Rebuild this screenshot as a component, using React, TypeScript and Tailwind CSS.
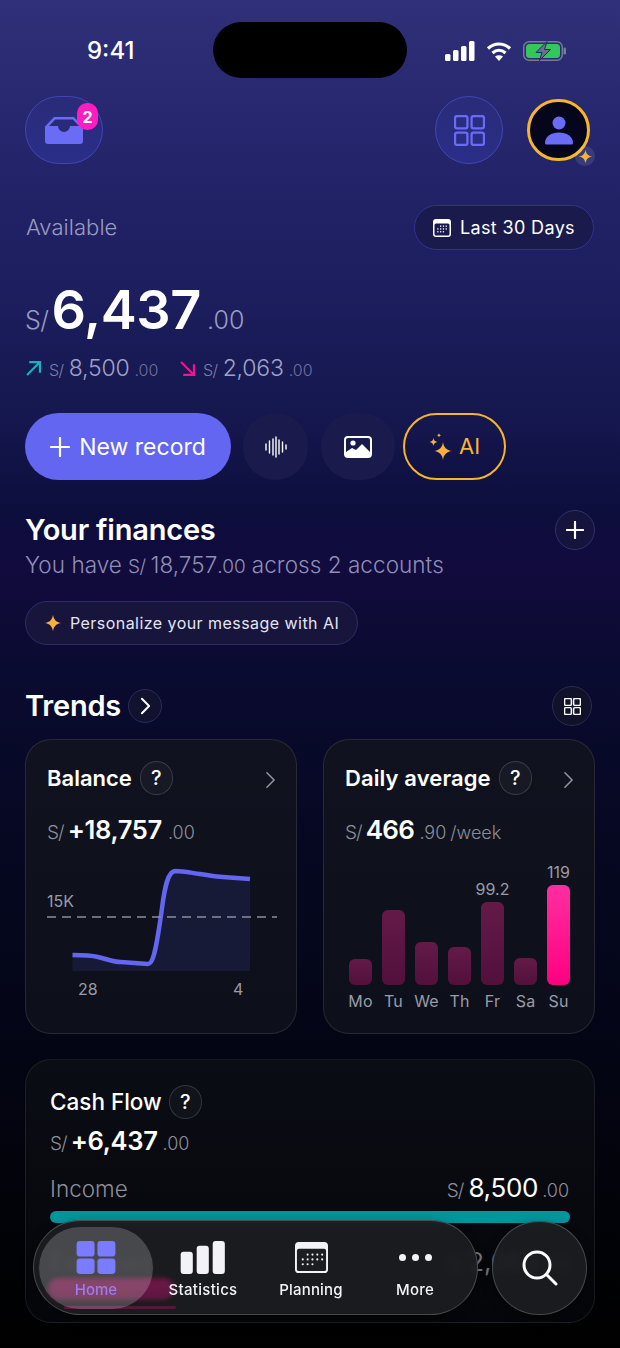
function Sparkle({ className, color = '#fbb03b' }: { className?: string; color?: string }) {
  return (
    <svg viewBox="0 0 24 24" className={className} fill={color}>
      <path d="M12 1c.9 6.600 4.400 10.100 11 11-6.600.9-10.100 4.400-11 11-.9-6.600-4.400-10.100-11-11 6.600-.9 10.100-4.400 11-11z" />
    </svg>
  );
}

function Help() {
  return (
    <div className="flex h-[34px] w-[33px] items-center justify-center rounded-full border border-white/15 bg-white/[0.03] text-[20px] font-medium text-white">
      ?
    </div>
  );
}

function Chevron({ className, strokeWidth = 1.800 }: { className?: string; strokeWidth?: number }) {
  return (
    <svg viewBox="0 0 12 20" className={className} fill="none" stroke="currentColor" strokeWidth={strokeWidth} strokeLinecap="round" strokeLinejoin="round">
      <path d="M2 2l8 8-8 8" />
    </svg>
  );
}

function GridIcon({ className, strokeWidth = 2 }: { className?: string; strokeWidth?: number }) {
  return (
    <svg viewBox="0 0 30 30" className={className} fill="none" stroke="currentColor" strokeWidth={strokeWidth}>
      <rect x="1" y="1" width="12" height="12" rx="2" />
      <rect x="17" y="1" width="12" height="12" rx="2" />
      <rect x="1" y="17" width="12" height="12" rx="2" />
      <rect x="17" y="17" width="12" height="12" rx="2" />
    </svg>
  );
}

const bars = [
  { day: 'Mo', h: 26 },
  { day: 'Tu', h: 75 },
  { day: 'We', h: 43 },
  { day: 'Th', h: 38 },
  { day: 'Fr', h: 83, label: '99.2' },
  { day: 'Sa', h: 27 },
  { day: 'Su', h: 100, label: '119', active: true },
];

export default function App() {
  return (
    <div className="relative h-[1348px] w-[620px] overflow-hidden bg-[linear-gradient(180deg,#30307a_0%,#23246a_12%,#1c1e5e_22%,#14164c_32%,#0c0e3c_38%,#120b3e_42%,#0a0b30_50%,#060822_62%,#04061a_72%,#020308_90%,#000000_100%)] font-['Inter',sans-serif] text-white">
      {/* status bar */}
      <div className="mt-[39px] flex h-[24px] items-center justify-between pl-[87px] pr-[54px]">
        <span className="text-[24px] font-medium leading-none">9:41</span>
        <div className="flex items-center gap-[11px]">
          <svg viewBox="0 0 30 20" className="h-[20px] w-[30px]" fill="white">
            <rect x="0" y="13" width="5.500" height="7" rx="1.500" />
            <rect x="8" y="9" width="5.500" height="11" rx="1.500" />
            <rect x="16" y="5" width="5.500" height="15" rx="1.500" />
            <rect x="24" y="0" width="5.500" height="20" rx="1.500" />
          </svg>
          <svg viewBox="0 0 26 20" className="h-[20px] w-[26px]" fill="none" stroke="white" strokeWidth="3.200">
            <path d="M2 7.500c6.500-6 15.500-6 22 0" />
            <path d="M6.500 12c4-3.600 9-3.600 13 0" />
            <path d="M13 20l-4-4.400c2.400-1.900 5.600-1.900 8 0z" fill="white" stroke="none" />
          </svg>
          <svg viewBox="0 0 43 20" className="h-[20px] w-[43px]">
            <rect x="0.700" y="0.700" width="38.600" height="18.600" rx="5.500" fill="none" stroke="#7a7b96" strokeWidth="1.400" />
            <rect x="3" y="3" width="34" height="14" rx="3.500" fill="#34c759" />
            <rect x="40.500" y="6.500" width="2.500" height="7" rx="1.200" fill="#7a7b96" />
            <path d="M24 0.500L13 11.500h6l-2.500 8 11-11h-6z" fill="#6d6f90" stroke="#23246a" strokeWidth="1" />
          </svg>
        </div>
      </div>
      <div className="absolute left-[213px] top-[22px] h-[56px] w-[194px] rounded-full bg-black" />

      {/* header */}
      <div className="mt-[33px] flex h-[68px] items-center justify-between pl-[25px] pr-[30px]">
        <div className="relative flex h-[68px] w-[78px] items-center justify-center rounded-full border border-[#4047b4] bg-[linear-gradient(180deg,#2a2b78,#2b2e88)]">
          <svg viewBox="0 0 40 28" className="mr-[1px] mt-[-1px] h-[28px] w-[40px]">
            <path d="M10 1h20l9 9.500V25a3 3 0 0 1-3 3H4a3 3 0 0 1-3-3V10.500z" fill="#6a6cf5" />
            <path d="M11.200 3.500h17.600l6.200 6.500H26a6 6 0 0 1-12 0H5z" fill="#2a2b78" />
          </svg>
          <div className="absolute left-[51px] top-[6px] flex h-[27px] w-[21px] items-center justify-center rounded-[10px] bg-[#ff1cc0] text-[16px] font-bold">2</div>
        </div>
        <div className="flex items-center gap-[24px]">
          <div className="flex h-[68px] w-[68px] items-center justify-center rounded-full border border-[#4047b4] bg-[linear-gradient(180deg,#2a2b78,#2b2e88)] text-[#6a6cf5]">
            <GridIcon className="h-[31px] w-[31px]" strokeWidth={2.200} />
          </div>
          <div className="relative flex h-[62px] w-[63px] items-center justify-center rounded-full border-[3px] border-[#f5b62c] bg-[#05051c]">
            <svg viewBox="0 0 28 30" className="h-[30px] w-[28px]" fill="#6a6cf5">
              <circle cx="14" cy="8" r="6.500" />
              <path d="M0 28c0-6.500 6.500-10.500 14-10.500S28 21.500 28 28c0 1-.7 1.500-1.500 1.500h-25C.7 29.500 0 29 0 28z" />
            </svg>
            <div className="absolute left-[45px] top-[44px] flex h-[20px] w-[20px] items-center justify-center rounded-full bg-white/10">
              <Sparkle className="h-[15px] w-[15px]" />
            </div>
          </div>
        </div>
      </div>

      {/* available */}
      <div className="mt-[41px] flex h-[45px] items-center justify-between pl-[26px] pr-[26px]">
        <span className="text-[22px] font-light tracking-[0.05px] text-[#9a9bc0]">Available</span>
        <div className="flex h-[45px] w-[180px] items-center justify-center gap-[9px] rounded-full border border-[#2f3290] bg-[#1a1a4c]">
          <svg viewBox="0 0 18 18" className="h-[18px] w-[18px]">
            <rect x="0" y="0" width="18" height="18" rx="3" fill="white" />
            <rect x="1.500" y="4.500" width="15" height="12" rx="1.500" fill="#1a1a4c" />
            <g fill="white">
              <rect x="7" y="6.500" width="1.300" height="1.300" /><rect x="9.800" y="6.500" width="1.300" height="1.300" /><rect x="12.600" y="6.500" width="1.300" height="1.300" />
              <rect x="4.200" y="9.300" width="1.300" height="1.300" /><rect x="7" y="9.300" width="1.300" height="1.300" /><rect x="9.800" y="9.300" width="1.300" height="1.300" /><rect x="12.600" y="9.300" width="1.300" height="1.300" />
              <rect x="4.200" y="12.100" width="1.300" height="1.300" /><rect x="7" y="12.100" width="1.300" height="1.300" /><rect x="9.800" y="12.100" width="1.300" height="1.300" />
            </g>
          </svg>
          <span className="text-[18px] font-normal tracking-[0.35px]">Last 30 Days</span>
        </div>
      </div>

      <div className="mt-[30px] flex h-[60px] items-baseline pl-[25px]">
        <span className="text-[25px] font-light tracking-[-0.5px] text-[#9a9bc0]">S/</span>
        <span className="ml-[3px] text-[54px] font-semibold leading-[60px] tracking-[-0.4px]">6,437</span>
        <span className="ml-[6px] text-[25px] font-light text-[#9a9bc0]">.00</span>
      </div>

      <div className="mt-[12px] flex h-[32px] items-center pl-[26px]">
        <svg viewBox="0 0 14 14" className="h-[15px] w-[15px]" fill="none" stroke="#16b3bd" strokeWidth="2">
          <path d="M1 13L13 1M3 1h10v10" />
        </svg>
        <div className="ml-[8px] flex w-[110px] items-baseline text-[#a0a1c4]">
          <span className="text-[16px] font-light tracking-[-0.5px] text-[#7f80a6]">S/</span>
          <span className="ml-[5px] text-[23px] font-light tracking-[-0.2px]">8,500</span>
          <span className="ml-[5px] text-[16px] font-light text-[#6f7098]">.00</span>
        </div>
        <svg viewBox="0 0 14 14" className="ml-[21px] h-[15px] w-[15px]" fill="none" stroke="#f0148f" strokeWidth="2">
          <path d="M1 1l12 12M3 13h10V3" />
        </svg>
        <div className="ml-[8px] flex items-baseline text-[#a0a1c4]">
          <span className="text-[16px] font-light tracking-[-0.5px] text-[#7f80a6]">S/</span>
          <span className="ml-[5px] text-[23px] font-light tracking-[-0.2px]">2,063</span>
          <span className="ml-[5px] text-[16px] font-light text-[#6f7098]">.00</span>
        </div>
      </div>

      {/* actions */}
      <div className="mt-[29px] flex h-[67px] items-center pl-[25px]">
        <div className="flex h-[67px] w-[206px] items-center justify-center gap-[9px] rounded-full bg-[#6366f1]">
          <svg viewBox="0 0 20 20" className="h-[20px] w-[20px]" stroke="white" strokeWidth="2.200" strokeLinecap="round">
            <path d="M10 1v18M1 10h18" />
          </svg>
          <span className="mt-[1px] text-[23px] font-normal">New record</span>
        </div>
        <div className="ml-[12px] flex h-[67px] w-[65px] items-center justify-center rounded-full bg-[#1a1b4c]">
          <svg viewBox="0 0 22 22" className="h-[22px] w-[22px]" stroke="white" strokeWidth="1.400" strokeLinecap="round">
            <path d="M1 8v6M4.500 5v12M8 3v16M11 1v20M14 4v14M17.500 6v10M21 9v4" />
          </svg>
        </div>
        <div className="ml-[13px] flex h-[67px] w-[74px] items-center justify-center rounded-full bg-[#1a1b4c]">
          <svg viewBox="0 0 28 22" className="h-[22px] w-[28px]">
            <rect x="1" y="1" width="26" height="20" rx="3" fill="#1a1b4c" stroke="white" strokeWidth="2" />
            <circle cx="9" cy="7" r="2.600" fill="white" />
            <path d="M2 20v-4l6-4 4 2 6-6 8 8v4z" fill="white" />
          </svg>
        </div>
        <div className="ml-[8px] flex h-[67px] w-[103px] items-center justify-center gap-[6px] rounded-full border-2 border-[#f5b62c]">
          <svg viewBox="0 0 24 28" className="h-[28px] w-[24px]" fill="#fbb03b">
            <path d="M14 9c.7 5.500 3.500 8.300 9 9-5.500.7-8.300 3.500-9 9-.7-5.500-3.500-8.300-9-9 5.500-.7 8.300-3.500 9-9z" />
            <path d="M4.500 5c.3 2.400 1.600 3.700 4 4-2.400.3-3.700 1.600-4 4-.3-2.400-1.600-3.700-4-4 2.400-.3 3.700-1.600 4-4z" />
            <path d="M10 0c.2 1.400.9 2.100 2.300 2.300-1.400.2-2.100.9-2.300 2.300-.2-1.400-.9-2.100-2.300-2.300C9.100 2.100 9.800 1.400 10 0z" />
          </svg>
          <span className="text-[22px] font-normal text-[#fbb03b]">AI</span>
        </div>
      </div>

      {/* finances */}
      <div className="mt-[30px] flex items-start justify-between pl-[25px] pr-[25px]">
        <div>
          <div className="text-[29px] font-semibold leading-[40px] tracking-[-0.2px]">Your finances</div>
          <div className="mt-[-3px] flex items-baseline text-[22.500px] font-light leading-[36px] tracking-[0.05px] text-[#8f8fb4]">
            You have<span className="ml-[6px] text-[19px] tracking-[-0.5px]">S/</span>
            <span className="ml-[5px]">18,757</span>
            <span className="text-[19px]">.00</span>
            <span className="ml-[6px]">across 2 accounts</span>
          </div>
        </div>
        <div className="flex h-[40px] w-[40px] items-center justify-center rounded-full border border-[#30316e] bg-[#14143c]">
          <svg viewBox="0 0 20 20" className="h-[18px] w-[18px]" stroke="white" strokeWidth="2.400" strokeLinecap="round">
            <path d="M10 1v18M1 10h18" />
          </svg>
        </div>
      </div>

      <div className="ml-[25px] mt-[16px] flex h-[44px] w-[333px] items-center gap-[8px] rounded-full border border-[#2e2c66] bg-[#17153c] pl-[18px]">
        <Sparkle className="h-[18px] w-[18px] shrink-0" />
        <span className="text-[16px] tracking-[0.45px] text-[#e4e4f0]">Personalize your message with AI</span>
      </div>

      {/* trends */}
      <div className="mt-[41px] flex h-[40px] items-center justify-between pl-[25px] pr-[28px]">
        <div className="flex items-center gap-[7px]">
          <span className="text-[29px] font-semibold tracking-[-0.2px]">Trends</span>
          <div className="flex h-[34px] w-[34px] items-center justify-center rounded-full border border-[#2a2c5a] bg-[#10122e]">
            <Chevron className="h-[18px] w-[11px] text-white" strokeWidth={2.200} />
          </div>
        </div>
        <div className="flex h-[40px] w-[40px] items-center justify-center rounded-full border border-[#2a2c4c] bg-[#10122a]">
          <GridIcon className="h-[17px] w-[17px]" strokeWidth={2.600} />
        </div>
      </div>

      <div className="mt-[13px] flex gap-[26px] pl-[25px]">
        {/* balance card */}
        <div className="h-[295px] w-[272px] rounded-[26px] border border-white/10 bg-[linear-gradient(180deg,#10131f,#0d101a)] px-[21px] pt-[21px]">
          <div className="flex h-[34px] items-center">
            <span className="text-[22px] font-semibold">Balance</span>
            <div className="ml-[8px]"><Help /></div>
            <Chevron className="ml-auto mr-[-1px] mt-[4px] h-[18px] w-[11px] text-[#8f919e]" />
          </div>
          <div className="mt-[16px] flex h-[30px] items-baseline">
            <span className="text-[19px] font-light tracking-[-1px] text-[#8c8e9a]">S/</span>
            <span className="ml-[4px] text-[25.500px] font-semibold tracking-[-0.3px]">+18,757</span>
            <span className="ml-[6px] text-[18px] font-light text-[#8c8e9a]">.00</span>
          </div>
          <svg viewBox="0 0 230 140" className="mt-[19px] h-[140px] w-[230px]">
            <path d="M25.500 95 L51 97 L74 102 L101 104 C106 104 109 92 115 48 C118 25 121 12 128 11 L153 14 L176 17 L203 19 V111 H25.500 Z" fill="#161a36" />
            <path d="M25.500 95 C35 95 43 95 51 97 C60 99 66 102 74 102 L101 104 C106 104 109 92 115 48 C118 25 121 12 128 11 C137 11 145 13 153 14 C161 15 168 16.500 176 17 L203 19" fill="none" stroke="#6366f1" strokeWidth="4.500" />
            <path d="M0 57 H230" stroke="#8c8e9a" strokeWidth="1.500" strokeDasharray="9 6" />
            <text x="0" y="47" fontSize="16" fill="#9a9ca8">15K</text>
            <text x="31" y="135" fontSize="16" fill="#9a9ca8">28</text>
            <text x="186" y="135" fontSize="16" fill="#9a9ca8">4</text>
          </svg>
        </div>

        {/* daily average card */}
        <div className="h-[295px] w-[272px] rounded-[26px] border border-white/10 bg-[linear-gradient(180deg,#10131f,#0d101a)] px-[21px] pt-[21px]">
          <div className="flex h-[34px] items-center">
            <span className="text-[22px] font-semibold tracking-[0.1px]">Daily average</span>
            <div className="ml-[8px]"><Help /></div>
            <Chevron className="ml-auto mr-[-1px] mt-[4px] h-[18px] w-[11px] text-[#8f919e]" />
          </div>
          <div className="mt-[15px] flex h-[30px] items-baseline">
            <span className="text-[19px] font-light tracking-[-1px] text-[#8c8e9a]">S/</span>
            <span className="ml-[4px] text-[26px] font-semibold tracking-[-0.6px]">466</span>
            <span className="ml-[5px] text-[18px] font-light text-[#8c8e9a]">.90</span>
            <span className="ml-[4px] text-[18px] font-light text-[#8c8e9a]">/week</span>
          </div>
          <div className="mt-[30px] flex h-[115px] items-end gap-[10px] pl-[4px]">
            {bars.map((b) => (
              <div key={b.day} className="relative flex w-[23px] flex-col items-center justify-end">
                {b.label && <span className="absolute bottom-full mb-[1px] text-[16px] text-[#9a9ca8]">{b.label}</span>}
                <div
                  className={b.active ? 'w-full rounded-[6px] bg-[linear-gradient(180deg,#ff2ea0,#ff0080)]' : 'w-full rounded-[6px] bg-[linear-gradient(180deg,#641a48,#52103c)]'}
                  style={{ height: b.h }}
                />
              </div>
            ))}
          </div>
          <div className="mt-[4px] flex gap-[10px] pl-[4px]">
            {bars.map((b) => (
              <span key={b.day} className="flex w-[23px] justify-center text-[16px] tracking-[0.2px] text-[#9a9ca8]">{b.day}</span>
            ))}
          </div>
        </div>
      </div>

      {/* cash flow */}
      <div className="ml-[25px] mt-[25px] h-[264px] w-[570px] rounded-[26px] border border-white/[0.08] bg-[linear-gradient(180deg,#0b0d15,#050609)] px-[24px] pt-[25px]">
        <div className="flex h-[34px] items-center">
          <span className="text-[22.500px] font-medium">Cash Flow</span>
          <div className="ml-[7px]"><Help /></div>
        </div>
        <div className="mt-[3px] flex items-baseline">
          <span className="text-[19px] font-light tracking-[-1px] text-[#8c8e9a]">S/</span>
          <span className="ml-[4px] text-[25.500px] font-semibold tracking-[-0.3px]">+6,437</span>
          <span className="ml-[5px] text-[18px] font-light text-[#8c8e9a]">.00</span>
        </div>
        <div className="mt-[8px] flex items-baseline justify-between">
          <span className="text-[22.500px] font-light text-[#8c8e9a]">Income</span>
          <div className="mr-[1px] flex items-baseline">
            <span className="text-[19px] font-light tracking-[-1px] text-[#8c8e9a]">S/</span>
            <span className="ml-[5px] text-[26px] font-normal tracking-[-0.3px]">8,500</span>
            <span className="ml-[4px] text-[18px] font-light text-[#8c8e9a]">.00</span>
          </div>
        </div>
        <div className="mt-[4px] h-[12px] w-full rounded-full bg-[#00969e]" />
        <div className="mt-[19px] flex h-[32px] items-baseline justify-between">
          <span className="text-[22.500px] font-light text-[#8c8e9a]">Expenses</span>
          <div className="mr-[1px] flex items-baseline text-[#77787f]">
            <span className="text-[19px] font-light tracking-[-1px]">S/</span>
            <span className="ml-[5px] text-[26px] font-normal tracking-[-0.3px]">2,063</span>
            <span className="ml-[4px] text-[18px] font-light">.00</span>
          </div>
        </div>
        <div className="mt-[6px] h-[12px] w-[125px] rounded-full bg-[#e0107f]" />
      </div>

      {/* bottom nav */}
      <div className="absolute left-[33px] top-[1220px] flex h-[95px] w-[445px] items-center rounded-full border border-white/20 bg-[#1c1d21]/92 px-[5px] shadow-[0_4px_12px_rgba(0,0,0,0.4)] backdrop-blur-[3px]">
        <div className="absolute left-[14px] top-[57px] h-[22px] w-[126px] rounded-full bg-[#e0107f]/35 blur-[2px]" />
        <div className="absolute left-[30px] top-[85px] h-[3px] w-[112px] rounded-full bg-[#e0107f]/30" />
        <div className="relative flex h-[82px] w-[114px] flex-col items-center justify-center rounded-full bg-white/20 pt-[8px]">
          <svg viewBox="0 0 40 34" className="h-[33px] w-[40px]" fill="#7b7bff">
            <rect x="0" y="0" width="18.500" height="16" rx="3.500" />
            <rect x="21.500" y="0" width="18.500" height="16" rx="3.500" />
            <rect x="0" y="18" width="18.500" height="16" rx="3.500" />
            <rect x="21.500" y="18" width="18.500" height="16" rx="3.500" />
          </svg>
          <span className="mt-[5px] text-[15px] font-medium text-[#9c7bf5]">Home</span>
        </div>
        <div className="relative mt-[7px] flex w-[100px] flex-col items-center">
          <svg viewBox="0 0 46 34" className="h-[33px] w-[46px]" fill="#f2f2f7">
            <rect x="0" y="11" width="12.500" height="23" rx="3" />
            <rect x="16.500" y="5" width="12.500" height="29" rx="3" />
            <rect x="33" y="0" width="12.500" height="34" rx="3" />
          </svg>
          <span className="mt-[5px] text-[15px] font-medium tracking-[0.3px] text-[#f2f2f7]">Statistics</span>
        </div>
        <div className="relative mt-[7px] flex w-[116px] flex-col items-center">
          <svg viewBox="0 0 36 34" className="h-[33px] w-[35px]">
            <rect x="1" y="1" width="34" height="32" rx="4" fill="#f2f2f7" />
            <rect x="3" y="8" width="30" height="23" rx="2" fill="#1c1d21" />
            <g fill="#f2f2f7">
              <circle cx="14" cy="14" r="1.100" /><circle cx="19" cy="14" r="1.100" /><circle cx="24" cy="14" r="1.100" /><circle cx="29" cy="14" r="1.100" />
              <circle cx="9" cy="19" r="1.100" /><circle cx="14" cy="19" r="1.100" /><circle cx="19" cy="19" r="1.100" /><circle cx="24" cy="19" r="1.100" /><circle cx="29" cy="19" r="1.100" />
              <circle cx="9" cy="24" r="1.100" /><circle cx="14" cy="24" r="1.100" /><circle cx="19" cy="24" r="1.100" />
            </g>
          </svg>
          <span className="mt-[5px] text-[15px] font-medium tracking-[0.2px] text-[#f2f2f7]">Planning</span>
        </div>
        <div className="relative mt-[7px] flex w-[92px] flex-col items-center">
          <div className="flex h-[33px] items-center gap-[6px]">
            <div className="h-[7px] w-[7px] rounded-full bg-[#f2f2f7]" />
            <div className="h-[7px] w-[7px] rounded-full bg-[#f2f2f7]" />
            <div className="h-[7px] w-[7px] rounded-full bg-[#f2f2f7]" />
          </div>
          <span className="mt-[5px] text-[15px] font-medium tracking-[0.2px] text-[#f2f2f7]">More</span>
        </div>
      </div>

      <div className="absolute left-[492px] top-[1221px] flex h-[94px] w-[95px] items-center justify-center rounded-full border border-white/20 bg-[#1c1d21]/92 shadow-[0_4px_12px_rgba(0,0,0,0.4)] backdrop-blur-[3px]">
        <svg viewBox="0 0 36 36" className="h-[36px] w-[36px]" fill="none" stroke="white" strokeWidth="3" strokeLinecap="round">
          <circle cx="15" cy="15" r="13" />
          <path d="M25 25l9 9" />
        </svg>
      </div>
    </div>
  );
}
